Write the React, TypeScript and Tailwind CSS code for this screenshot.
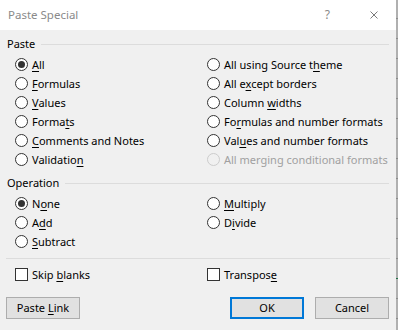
import React from "react";

const F = { fontFamily: '"Noto Sans", "Open Sans", sans-serif' };

function U({ children }: { children: React.ReactNode }) {
  return <span className="underline underline-offset-2 decoration-1">{children}</span>;
}

function Radio({ checked, disabled, children }: { checked?: boolean; disabled?: boolean; children: React.ReactNode }) {
  return (
    <div className="flex items-center h-[19px] gap-[4px]">
      <div
        className={
          "w-[13px] h-[13px] rounded-full border flex items-center justify-center shrink-0 " +
          (disabled ? "border-[#cccccc] bg-[#f0f0f0]" : "border-[#333333] bg-white")
        }
      >
        {checked && <div className="w-[7px] h-[7px] rounded-full bg-[#333333]" />}
      </div>
      <span className={"text-[11px] leading-[16px] whitespace-nowrap " + (disabled ? "text-[#a0a0a0]" : "text-black")}>
        {children}
      </span>
    </div>
  );
}

function Check({ children }: { children: React.ReactNode }) {
  return (
    <div className="flex items-center h-[19px] gap-[4px]">
      <div className="w-[13px] h-[13px] border border-[#333333] bg-white shrink-0" />
      <span className="text-[11px] leading-[16px] whitespace-nowrap text-black">{children}</span>
    </div>
  );
}

function Header({ label }: { label: string }) {
  return (
    <div className="flex items-center h-[16px] gap-[6px]">
      <span className="text-[11px] leading-[16px] text-black">{label}</span>
      <div className="flex-1 h-px bg-[#dcdcdc]" />
    </div>
  );
}

function Btn({ children, def }: { children: React.ReactNode; def?: boolean }) {
  return (
    <div
      className={
        "w-[74px] h-[22px] flex items-center justify-center bg-[#e1e1e1] text-[11px] leading-[16px] text-black " +
        (def ? "border-2 border-[#0078d7]" : "border border-[#adadad]")
      }
    >
      <span className="whitespace-nowrap">{children}</span>
    </div>
  );
}

export default function App() {
  const ticks = Array.from({ length: 16 });
  return (
    <div className="w-[404px] h-[330px] flex bg-white overflow-hidden" style={F}>
      <div className="w-[396px] h-full flex flex-col">
        <div className="h-[30px] bg-white flex items-center pl-[8px] shrink-0">
          <span className="text-[11.5px] leading-[16px] text-[#8a8a8a]">Paste Special</span>
          <div className="flex-1" />
          <span className="text-[12px] leading-[16px] text-[#8a8a8a] mr-[40px]">?</span>
          <svg width="8" height="8" viewBox="0 0 8 8" className="mr-[18px]">
            <path d="M0.5 0.5 L7.5 7.5 M7.5 0.5 L0.5 7.5" stroke="#7a7a7a" strokeWidth="1" fill="none" />
          </svg>
        </div>
        <div className="flex-1 bg-[#f0f0f0] flex flex-col pl-[7px] pr-[7px]">
          <div className="mt-[6px]">
            <Header label="Paste" />
          </div>
          <div className="grid grid-cols-[192px_1fr] pl-[8px] mt-[3px]">
            <div className="flex flex-col">
              <Radio checked><U>A</U>ll</Radio>
              <Radio><U>F</U>ormulas</Radio>
              <Radio><U>V</U>alues</Radio>
              <Radio>Forma<U>t</U>s</Radio>
              <Radio><U>C</U>omments and Notes</Radio>
              <Radio>Validatio<U>n</U></Radio>
            </div>
            <div className="flex flex-col">
              <Radio>All using Source t<U>h</U>eme</Radio>
              <Radio>All e<U>x</U>cept borders</Radio>
              <Radio>Column <U>w</U>idths</Radio>
              <Radio>Fo<U>r</U>mulas and number formats</Radio>
              <Radio>Val<U>u</U>es and number formats</Radio>
              <Radio disabled>All merging conditional formats</Radio>
            </div>
          </div>
          <div className="mt-[6px]">
            <Header label="Operation" />
          </div>
          <div className="grid grid-cols-[192px_1fr] pl-[8px] mt-[3px]">
            <div className="flex flex-col">
              <Radio checked>N<U>o</U>ne</Radio>
              <Radio>A<U>d</U>d</Radio>
              <Radio><U>S</U>ubtract</Radio>
            </div>
            <div className="flex flex-col">
              <Radio><U>M</U>ultiply</Radio>
              <Radio>D<U>i</U>vide</Radio>
            </div>
          </div>
          <div className="h-px bg-[#dcdcdc] mt-[7px] mr-[-1px] ml-[-1px]" />
          <div className="grid grid-cols-[192px_1fr] pl-[8px] mt-[6px]">
            <Check>Skip <U>b</U>lanks</Check>
            <Check>Transpos<U>e</U></Check>
          </div>
          <div className="flex items-center mt-[13px] ml-[-1px]">
            <Btn>Paste <U>L</U>ink</Btn>
            <div className="flex-1" />
            <Btn def>OK</Btn>
            <div className="w-[11px]" />
            <Btn>Cancel</Btn>
          </div>
        </div>
      </div>
      <div className="w-[2px] h-full bg-[#b0b0b0] flex flex-col pt-[18px]">
        {ticks.map((_, i) => (
          <div key={i} className="h-[20px] shrink-0">
            <div className={"h-px " + (i === 13 ? "bg-[#217346] h-[2px]" : "bg-[#8c8c8c]")} />
          </div>
        ))}
      </div>
      <div className="flex-1 bg-white" />
    </div>
  );
}
